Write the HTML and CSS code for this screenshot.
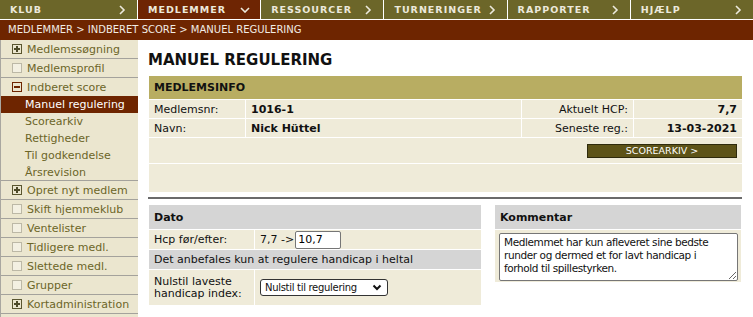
FILE: index.html
```html
<!DOCTYPE html>
<html lang="da">
<head>
    <meta charset="UTF-8">
    <title>Manuel regulering</title>
    <link rel="stylesheet" href="styles.css">
</head>
<body>
    <div id="topmenu">
        <div class="menu-item first">KLUB <svg class="chev" width="7" height="10" viewBox="0 0 7 10"><polyline points="1,1 5,5 1,9"/></svg></div>
        <div class="menu-item active">MEDLEMMER <svg class="chev-down" width="10" height="6" viewBox="0 0 10 6"><polyline points="1,1 5,5 9,1"/></svg></div>
        <div class="menu-item">RESSOURCER <svg class="chev" width="7" height="10" viewBox="0 0 7 10"><polyline points="1,1 5,5 1,9"/></svg></div>
        <div class="menu-item">TURNERINGER <svg class="chev" width="7" height="10" viewBox="0 0 7 10"><polyline points="1,1 5,5 1,9"/></svg></div>
        <div class="menu-item">RAPPORTER <svg class="chev" width="7" height="10" viewBox="0 0 7 10"><polyline points="1,1 5,5 1,9"/></svg></div>
        <div class="menu-item">HJÆLP <svg class="chev" width="7" height="10" viewBox="0 0 7 10"><polyline points="1,1 5,5 1,9"/></svg></div>
    </div>

    <div id="crumbs">MEDLEMMER &gt; INDBERET SCORE &gt; MANUEL REGULERING</div>

    <div id="page">
        <div id="sidebar">
            <div class="side-item"><span class="box plus"></span>Medlemssøgning</div>
            <div class="side-item"><span class="box"></span>Medlemsprofil</div>
            <div class="side-item open"><span class="box minus"></span>Indberet score</div>
            <div class="sub-item current">Manuel regulering</div>
            <div class="sub-item">Scorearkiv</div>
            <div class="sub-item">Rettigheder</div>
            <div class="sub-item">Til godkendelse</div>
            <div class="sub-item last">Årsrevision</div>
            <div class="side-item"><span class="box plus"></span>Opret nyt medlem</div>
            <div class="side-item"><span class="box"></span>Skift hjemmeklub</div>
            <div class="side-item"><span class="box"></span>Ventelister</div>
            <div class="side-item"><span class="box"></span>Tidligere medl.</div>
            <div class="side-item"><span class="box"></span>Slettede medl.</div>
            <div class="side-item"><span class="box"></span>Grupper</div>
            <div class="side-item"><span class="box plus"></span>Kortadministration</div>
        </div>

        <div id="content">
            <h1>MANUEL REGULERING</h1>

            <table class="grid info">
                <colgroup>
                    <col style="width: 97px">
                    <col style="width: 276px">
                    <col style="width: 112px">
                    <col style="width: 109px">
                </colgroup>
                <tr class="head"><th colspan="4">MEDLEMSINFO</th></tr>
                <tr>
                    <td>Medlemsnr:</td>
                    <td class="val">1016-1</td>
                    <td class="right">Aktuelt HCP:</td>
                    <td class="val right">7,7</td>
                </tr>
                <tr>
                    <td>Navn:</td>
                    <td class="val">Nick Hüttel</td>
                    <td class="right">Seneste reg.:</td>
                    <td class="val right">13-03-2021</td>
                </tr>
                <tr class="btn-row">
                    <td colspan="4"><div class="btn-wrap"><span class="btn">SCOREARKIV &gt;</span></div></td>
                </tr>
                <tr class="empty-row"><td colspan="4"></td></tr>
            </table>

            <div class="divider"></div>

            <div class="lower">
                <table class="grid dato">
                    <colgroup>
                        <col style="width: 106px">
                        <col style="width: 227px">
                    </colgroup>
                    <tr class="head gray"><th colspan="2">Dato</th></tr>
                    <tr>
                        <td>Hcp før/efter:</td>
                        <td class="hcp">7,7 -&gt;<input type="text" class="hcp-input" value="10,7"></td>
                    </tr>
                    <tr class="note"><td colspan="2">Det anbefales kun at regulere handicap i heltal</td></tr>
                    <tr class="tall">
                        <td class="two-line">Nulstil laveste handicap index:</td>
                        <td>
                            <div class="select-wrap">
                                <select class="select">
                                    <option>Nulstil til regulering</option>
                                </select>
                                <svg class="select-arrow" width="10" height="7" viewBox="0 0 10 7"><polyline points="1.5,1.5 5,5 8.5,1.5"/></svg>
                            </div>
                        </td>
                    </tr>
                </table>

                <table class="grid komment">
                    <tr class="head gray"><th>Kommentar</th></tr>
                    <tr>
                        <td class="text-cell"><textarea class="comment">Medlemmet har kun afleveret sine bedste runder og dermed et for lavt handicap i forhold til spillestyrken.</textarea></td>
                    </tr>
                </table>
            </div>
        </div>
    </div>
</body>
</html>
```

FILE: styles.css
```css
body {
    margin: 0;
    font-family: "DejaVu Sans", Verdana, sans-serif;
    font-size: 11px;
    color: #111;
    background-color: #fff;
}

/* topmenu */
#topmenu {
    display: flex;
    gap: 1px;
    height: 19px;
    background-color: #fff;
    border-bottom: 1px solid #fff;
}
.menu-item {
    flex: 1;
    display: flex;
    align-items: center;
    justify-content: space-between;
    padding: 0 10px;
    background-color: #6c6629;
    color: #ece9dc;
    font-size: 9.5px;
    font-weight: bold;
    letter-spacing: 1px;
}
.menu-item.first {
    flex: 0 0 137px;
    box-sizing: border-box;
}
.menu-item.active {
    background-color: #6e2503;
}
.chev polyline, .chev-down polyline {
    fill: none;
    stroke: #ece9dc;
    stroke-width: 1.6;
}
.chev {
    margin-right: 1px;
}

#crumbs {
    height: 20px;
    line-height: 20px;
    padding-left: 8px;
    background-color: #6e2500;
    color: #f1ece4;
    font-size: 10px;
}

#page {
    display: flex;
}

/* venstre menu */
#sidebar {
    width: 137px;
    flex: 0 0 137px;
    background-color: #ebe6cf;
    border-left: 1px solid #a9a7a0;
    padding-bottom: 10px;
}
.side-item, .sub-item {
    display: flex;
    align-items: center;
    padding-left: 11px;
    color: #6b6528;
    white-space: nowrap;
}
.side-item {
    height: 18px;
    border-bottom: 1px solid #a4a29c;
}
.side-item.open {
    border-bottom: 0;
}
.sub-item {
    height: 17px;
    padding-left: 24px;
}
.sub-item.last {
    height: 16px;
    border-bottom: 1px solid #a4a29c;
}
.sub-item.current {
    background-color: #6e2500;
    color: #fff;
}
.box {
    width: 8px;
    height: 8px;
    margin-right: 5px;
    border: 1px solid #bcb8a6;
    background-color: #f3f0e2;
    position: relative;
    flex: 0 0 auto;
}
.box.plus, .box.minus {
    border-color: #5a5630;
    background-color: transparent;
}
.box.minus {
    border-color: #6e2500;
}
.box.plus::before, .box.minus::before {
    content: "";
    position: absolute;
    left: 1px;
    top: 3px;
    width: 6px;
    height: 2px;
    background-color: #4d4a28;
}
.box.minus::before {
    background-color: #6e2500;
}
.box.plus::after {
    content: "";
    position: absolute;
    left: 3px;
    top: 1px;
    width: 2px;
    height: 6px;
    background-color: #4d4a28;
}

/* indhold */
#content {
    padding-left: 10px;
    width: 594px;
}
h1 {
    margin: 12px 0 7px 0;
    font-size: 15px;
    line-height: 16px;
    font-weight: bold;
    color: #111;
}

.grid {
    border-collapse: collapse;
    table-layout: fixed;
}
.grid td, .grid th {
    border: 1px solid #fff;
    background-color: #efebd9;
    padding: 0 5px;
    height: 18px;
    text-align: left;
    font-weight: normal;
}
.grid .head th {
    height: 23px;
    background-color: #b8ad62;
    font-weight: bold;
}
.grid .head.gray th {
    background-color: #d5d5d5;
}
.info {
    width: 594px;
}
.info .val {
    font-weight: bold;
}
.info .right {
    text-align: right;
}
.btn-row td {
    height: 25px;
}
.btn-wrap {
    display: flex;
    justify-content: flex-end;
}
.btn {
    width: 148px;
    height: 12px;
    line-height: 12px;
    background-color: #5d5318;
    border: 1px solid #2e2a0c;
    color: #fff;
    font-size: 9.5px;
    text-align: center;
}
.empty-row td {
    height: 28px;
}

.divider {
    margin-top: 4px;
    height: 2px;
    background-color: #6a6a6a;
}

.lower {
    display: flex;
    justify-content: space-between;
    align-items: flex-start;
    margin-top: 5px;
}
.dato {
    width: 333px;
}
.dato .head th, .komment .head th {
    height: 24px;
}
.dato td {
    height: 19px;
}
.hcp {
    white-space: nowrap;
}
.hcp-input {
    width: 40px;
    height: 16px;
    margin: 0 0 0 1px;
    padding: 0 2px;
    border: 1px solid #767676;
    border-radius: 2px;
    font-family: "DejaVu Sans", Verdana, sans-serif;
    font-size: 11px;
    vertical-align: middle;
}
.note td {
    background-color: #d5d5d5;
}
.dato .tall td {
    height: 35px;
}
.two-line {
    line-height: 12px;
}
.select-wrap {
    position: relative;
    width: 128px;
    height: 17px;
}
.select {
    appearance: none;
    -webkit-appearance: none;
    width: 128px;
    height: 17px;
    margin: 0;
    padding: 0 0 0 4px;
    border: 1px solid #333;
    border-radius: 3px;
    background-color: #fff;
    font-family: "DejaVu Sans", Verdana, sans-serif;
    font-size: 10px;
    letter-spacing: -0.3px;
    color: #111;
}
.select-arrow {
    position: absolute;
    right: 6px;
    top: 5px;
}
.select-arrow polyline {
    fill: none;
    stroke: #111;
    stroke-width: 2;
}

.komment {
    width: 248px;
}
.komment .text-cell {
    padding: 3px 4px 1px 4px;
}
.comment {
    display: block;
    box-sizing: border-box;
    width: 239px;
    height: 48px;
    margin: 0;
    padding: 2px 9px 2px 4px;
    border: 1px solid #767676;
    border-radius: 2px;
    overflow: hidden;
    font-family: "DejaVu Sans", Verdana, sans-serif;
    font-size: 10.5px;
    letter-spacing: -0.4px;
    line-height: 13px;
    color: #111;
    resize: vertical;
}
```
